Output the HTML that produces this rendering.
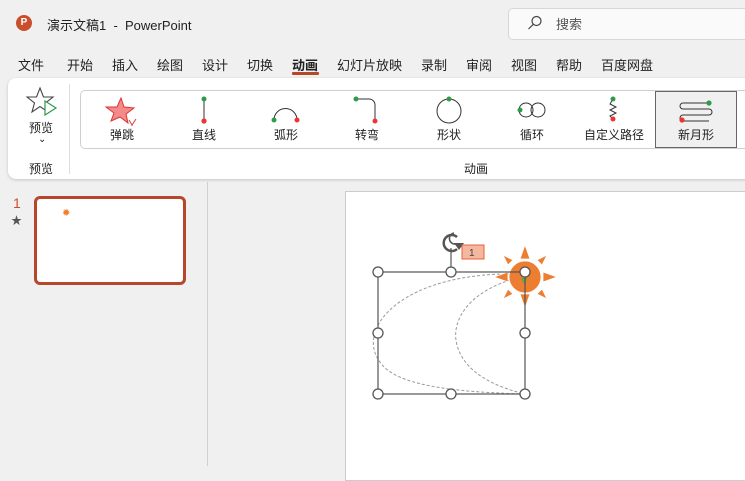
<!DOCTYPE html>
<html><head><meta charset="utf-8"><style>
*{margin:0;padding:0;box-sizing:border-box}
body{width:745px;height:466px;overflow:hidden;background:#f0f0f0;font-family:"Liberation Sans","Noto Sans CJK SC",sans-serif;position:relative;color:#222}
.a{position:absolute}
.t{font-size:13px;white-space:nowrap}
.lbl{position:absolute;font-size:12px;white-space:nowrap;transform:translateX(-50%);top:36px}
</style></head><body>
<div class="a" style="left:16px;top:15px;width:16px;height:16px;border-radius:50%;background:#c94f2c;color:#fff;font-size:10px;font-weight:bold;line-height:16px;text-align:center">P</div>
<div class="a t" style="left:47px;top:15px">演示文稿1&nbsp; - &nbsp;PowerPoint</div>
<div class="a" style="left:508px;top:8px;width:250px;height:32px;background:#fafafa;border:1px solid #d6d6d6;border-radius:5px"></div>
<svg class="a" style="left:527px;top:15px" width="16" height="16"><circle cx="9.5" cy="6" r="4.5" fill="none" stroke="#444" stroke-width="1.2"/><line x1="6.3" y1="9.3" x2="1.5" y2="14" stroke="#444" stroke-width="1.2"/></svg>
<div class="a t" style="left:556px;top:14px;color:#555">搜索</div>
<div class="a t" style="top:55px;left:18px">文件</div>
<div class="a t" style="top:55px;left:67px">开始</div>
<div class="a t" style="top:55px;left:112px">插入</div>
<div class="a t" style="top:55px;left:157px">绘图</div>
<div class="a t" style="top:55px;left:202px">设计</div>
<div class="a t" style="top:55px;left:247px">切换</div>
<div class="a t" style="top:55px;left:292px;font-weight:bold">动画</div>
<div class="a" style="top:72px;left:292px;width:27px;height:3px;background:#b7472a;border-radius:1px"></div>
<div class="a t" style="top:55px;left:337px">幻灯片放映</div>
<div class="a t" style="top:55px;left:421px">录制</div>
<div class="a t" style="top:55px;left:466px">审阅</div>
<div class="a t" style="top:55px;left:511px">视图</div>
<div class="a t" style="top:55px;left:556px">帮助</div>
<div class="a t" style="top:55px;left:601px">百度网盘</div>
<div class="a" style="left:8px;top:78px;width:760px;height:101px;background:#fff;border-radius:8px;box-shadow:0 1px 3px rgba(0,0,0,.18)"></div>
<svg class="a" style="left:26px;top:86px" width="34" height="30"><polygon points="14,2 17.5,11 27,11 19.5,17 22,26 14,20.5 6,26 8.5,17 1,11 10.5,11" fill="#fff" stroke="#444" stroke-width="1.1"/><polygon points="19,15 30,22 19,29" fill="#fff" stroke="#2e9a4a" stroke-width="1.2"/></svg>
<div class="a" style="left:29px;top:119px;font-size:12px">预览</div>
<div class="a" style="left:38px;top:134px;font-size:10px">⌄</div>
<div class="a" style="left:29px;top:160px;font-size:12px">预览</div>
<div class="a" style="left:69px;top:84px;width:1px;height:90px;background:#ddd"></div>
<div class="a" style="left:80px;top:90px;width:680px;height:59px;border:1px solid #cfcfcf;border-radius:5px"></div>
<div class="a" style="left:655px;top:91px;width:82px;height:57px;background:#f0f0f0;border:1px solid #666"></div>
<div class="a" style="left:464px;top:160px;font-size:12px">动画</div>
<div class="a" style="left:0;top:90px;width:745px;height:60px">
<svg class="a" style="left:105px;top:6px" width="36" height="30"><polygon points="16,2 19,11 29,12 21,18 23,27 15,21 6,25 9,17 1,11 12,11" fill="#f48a8a" stroke="#d33" stroke-width="1"/><path d="M24,24 l3,5 l4,-6 M27,29 v1" fill="none" stroke="#d33" stroke-width="1"/></svg>
<div class="lbl" style="left:122px">弹跳</div>
<svg class="a" style="left:198px;top:6px" width="12" height="28"><line x1="6" y1="3" x2="6" y2="25" stroke="#333"/><circle cx="6" cy="3" r="2.5" fill="#2e9a4a"/><circle cx="6" cy="25" r="2.6" fill="#e33"/></svg>
<div class="lbl" style="left:204px">直线</div>
<svg class="a" style="left:271px;top:9px" width="30" height="26"><path d="M3,21 A11.5,11.5 0 0 1 26,21" fill="none" stroke="#333"/><circle cx="3" cy="21" r="2.5" fill="#2e9a4a"/><circle cx="26" cy="21" r="2.5" fill="#e33"/></svg>
<div class="lbl" style="left:286px">弧形</div>
<svg class="a" style="left:352px;top:6px" width="30" height="28"><path d="M4,3 H17 A6,6 0 0 1 23,9 V25" fill="none" stroke="#333"/><circle cx="4" cy="3" r="2.5" fill="#2e9a4a"/><circle cx="23" cy="25" r="2.5" fill="#e33"/></svg>
<div class="lbl" style="left:367px">转弯</div>
<svg class="a" style="left:434px;top:5px" width="30" height="30"><circle cx="15" cy="16" r="12" fill="none" stroke="#333"/><circle cx="15" cy="4" r="2.5" fill="#2e9a4a"/></svg>
<div class="lbl" style="left:449px">形状</div>
<svg class="a" style="left:516px;top:9px" width="34" height="22"><circle cx="10" cy="11" r="7" fill="none" stroke="#333"/><circle cx="22" cy="11" r="7" fill="none" stroke="#333"/><circle cx="4" cy="11" r="2.5" fill="#2e9a4a"/></svg>
<div class="lbl" style="left:532px">循环</div>
<svg class="a" style="left:606px;top:5px" width="14" height="30"><path d="M7,4 L4,9 L10,12 L4,15 L10,18 L4,21 L7,24" fill="none" stroke="#333"/><circle cx="7" cy="4" r="2.5" fill="#2e9a4a"/><circle cx="7" cy="24" r="2.5" fill="#e33"/></svg>
<div class="lbl" style="left:614px">自定义路径</div>
<svg class="a" style="left:676px;top:9px" width="40" height="24"><path d="M33,4 H7 A3,3 0 0 0 7,10 H33 A3,3 0 0 1 33,16 H7 A3,3 0 0 0 7,22 H33" fill="none" stroke="#333"/><circle cx="33" cy="4" r="2.6" fill="#2e9a4a"/><circle cx="6" cy="21" r="2.6" fill="#e33"/></svg>
<div class="lbl" style="left:696px">新月形</div>
</div>
<div class="a" style="left:13px;top:195px;font-size:14px;color:#c94f2c">1</div>
<div class="a" style="left:11px;top:212px;font-size:11px;color:#555">★</div>
<div class="a" style="left:34px;top:196px;width:152px;height:89px;border:3px solid #b7472a;border-radius:6px;background:#fff"></div>
<div class="a" style="left:62px;top:208px;font-size:10px;color:#f08030">✹</div>
<div class="a" style="left:207px;top:182px;width:1px;height:284px;background:#d0d0d0"></div>
<div class="a" style="left:345px;top:191px;width:410px;height:290px;background:#fff;border:1px solid #ccc"></div>
<svg class="a" style="left:340px;top:180px" width="260" height="230">
<path d="M185,94 C60,90 15,150 40,182 C55,205 110,212 185,214" fill="none" stroke="#999" stroke-dasharray="3,2"/>
<path d="M185,96 C130,108 110,140 117,165 C125,195 160,208 185,214" fill="none" stroke="#999" stroke-dasharray="3,2"/>
<g fill="#ed7d31" stroke="#fff" stroke-width="0.8">
<polygon points="185,65 180,79 190,79"/><polygon points="185,128 180,114 190,114"/>
<polygon points="154,97 168,92 168,102"/><polygon points="217,97 203,92 203,102"/>
<polygon points="163,75 173,80 168,85"/><polygon points="207,75 197,80 202,85"/>
<polygon points="163,119 168,109 173,114"/><polygon points="207,119 202,109 197,114"/>
<circle cx="185" cy="97" r="16"/></g>
<path d="M182,99 l3,5 l1,-6 z" fill="#5c5" stroke="#3a3" stroke-width=".8"/>
<rect x="38" y="92" width="147" height="122" fill="none" stroke="#555" stroke-width="1.2"/>
<line x1="111" y1="92" x2="111" y2="68" stroke="#555" stroke-width="1.2"/>
<path d="M117,57 A8,8 0 1 0 117,69" fill="none" stroke="#555" stroke-width="2.5"/><path d="M114,53 A4,4 0 1 0 116,64" fill="none" stroke="#555" stroke-width="1.5"/><polygon points="114,63 124,63 119,70" fill="#555"/>
<rect x="122" y="65" width="22" height="14" fill="#f4b8a0" stroke="#e8603c"/><text x="129" y="76" font-size="10" fill="#444" font-family="Liberation Sans">1</text>
<g fill="#fff" stroke="#555" stroke-width="1.3">
<circle cx="38" cy="92" r="5"/><circle cx="111" cy="92" r="5"/><circle cx="185" cy="92" r="5"/>
<circle cx="38" cy="153" r="5"/><circle cx="185" cy="153" r="5"/>
<circle cx="38" cy="214" r="5"/><circle cx="111" cy="214" r="5"/><circle cx="185" cy="214" r="5"/></g>
</svg>
</body></html>
